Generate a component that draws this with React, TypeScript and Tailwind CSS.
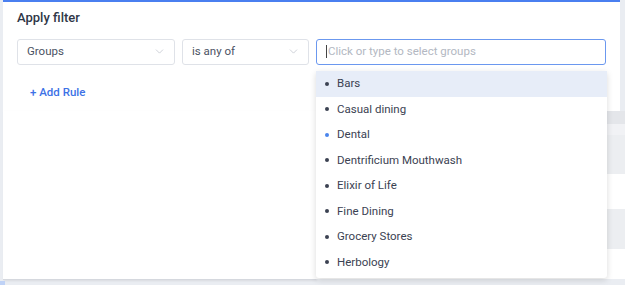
import { ChevronDown } from "lucide-react";

const groups = [
    { name: "Bars", active: true },
    { name: "Casual dining" },
    { name: "Dental", blue: true },
    { name: "Dentrificium Mouthwash" },
    { name: "Elixir of Life" },
    { name: "Fine Dining" },
    { name: "Grocery Stores" },
    { name: "Herbology" },
];

// striped rows of the table sitting behind the popover
const rows = [
    { h: "h-[13px]", bg: "bg-[#e4e6ea]" },
    { h: "h-[11px]", bg: "bg-[#f1f2f5]" },
    { h: "h-[39px]", bg: "bg-[#eceef1]" },
    { h: "h-[35px]", bg: "bg-white" },
    { h: "h-[40px]", bg: "bg-[#eceef1]" },
    { h: "h-[30px]", bg: "bg-white" },
];

function Select({ label, width }: { label: string; width: string }) {
    return (
        <div className={`${width} h-[26px] flex items-center justify-between border border-[#dfe2e8] rounded-[3px] pl-[9px] pr-[8px] text-[11.5px] text-[#4a5263]`}>
            <span>{label}</span>
            <ChevronDown size={13} strokeWidth={1.2} className="text-[#b5bac4]" />
        </div>
    );
}

export default function App() {
    return (
        <div className="w-[625px] h-[285px] overflow-hidden relative bg-[#eaedf2] flex flex-col" style={{ fontFamily: "Roboto, 'Liberation Sans', sans-serif" }}>
            {/* filter panel */}
            <div className="ml-[3px] w-[617px] h-[111px] shrink-0 bg-white border-t-2 border-[#4a7ff0] px-[14px] pt-[6px]">
                <div className="text-[13px] font-medium text-[#2f3747]">Apply filter</div>
                <div className="flex gap-[7px] mt-[11px]">
                    <Select label="Groups" width="w-[158px]" />
                    <Select label="is any of" width="w-[127px]" />
                    <div className="w-[290px] h-[26px] flex items-center border border-[#6b98ef] rounded-[3px] pl-[9px] text-[11.5px] text-[#b3b8c2]">
                        <span className="w-px h-[13px] bg-[#444] mr-px"></span>
                        Click or type to select groups
                    </div>
                </div>
                <div className="mt-[19px] ml-[13px] text-[11.5px] font-medium text-[#3d72e6]">+ Add Rule</div>
            </div>

            {/* page content behind */}
            <div className="flex flex-1">
                <div className="ml-[3px] w-[313px] h-[169px] bg-white border-b border-[#d5d8de] shadow-[1px_1px_2px_rgba(0,0,0,0.08)]"></div>
                <div className="flex-1 flex flex-col">
                    {rows.map((r, i) => (
                        <div key={i} className={`${r.h} ${r.bg}`}></div>
                    ))}
                </div>
            </div>
            <div className="absolute left-0 bottom-0 w-[5px] h-[4px] bg-[#bfd2f6]"></div>

            {/* dropdown */}
            <div className="absolute left-[316px] top-[71px] w-[291px] bg-white rounded-b-[3px] shadow-[0_2px_6px_rgba(0,0,0,0.15)] pb-[3px]">
                {groups.map((g) => (
                    <div key={g.name} className={`h-[25.5px] flex items-center pl-[9px] text-[11.5px] text-[#3b4252] ${g.active ? "bg-[#e7edf8]" : ""}`}>
                        <span className={`w-[4px] h-[4px] rounded-full mr-[8px] ${g.blue ? "bg-[#4a85ec]" : "bg-[#3b4252]"}`}></span>
                        {g.name}
                    </div>
                ))}
            </div>
        </div>
    );
}
